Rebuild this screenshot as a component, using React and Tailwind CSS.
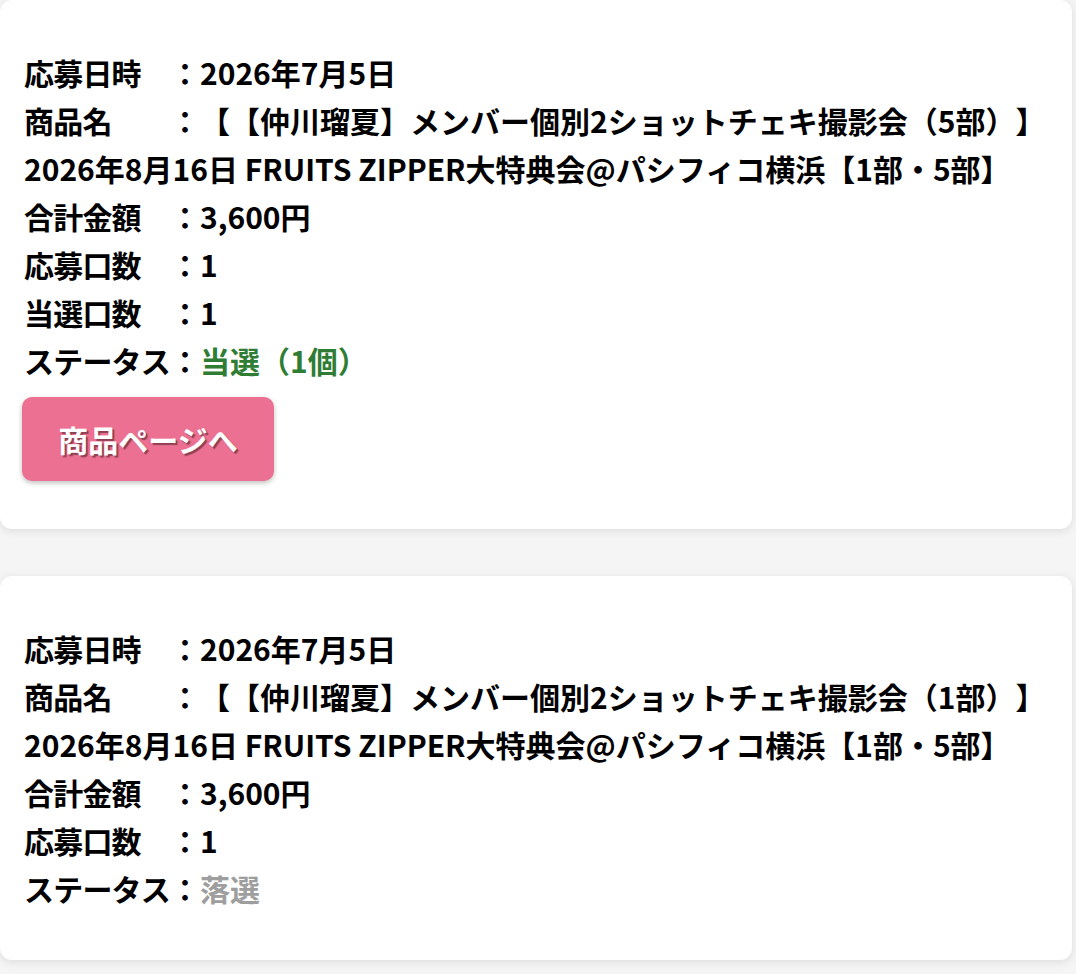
import React from 'react';

const FONT = { fontFamily: '"Noto Sans CJK JP", "Noto Sans", sans-serif' };

function Label({ children }) {
  return <span className="inline-block w-[146px] whitespace-nowrap tracking-[-0.8px]">{children}</span>;
}

function Row({ label, children }) {
  return (
    <div className="leading-[48px]">
      <Label>{label}</Label>
      <span>：</span>
      {children}
    </div>
  );
}

function EntryCard({ name, won, status, statusClass, showButton }) {
  return (
    <div className="w-[1072px] bg-white rounded-[12px] shadow-[0_2px_10px_rgba(0,0,0,0.10)] px-6 pt-[48px] pb-[48px]">
      <div className="text-[30px] font-bold text-black [text-spacing-trim:space-all]">
        <Row label="応募日時">2026年7月5日</Row>
        <div className="leading-[48px]">
          <Label>商品名</Label>
          <span>：</span>
          【【仲川瑠夏】メンバー個別2ショットチェキ撮影会（{name}）】
          <br />
          2026年8月16日 FRUITS ZIPPER大特典会@パシフィコ横浜【1部・5部】
        </div>
        <Row label="合計金額">3,600円</Row>
        <Row label="応募口数">1</Row>
        {won && <Row label="当選口数">1</Row>}
        <Row label="ステータス">
          <span className={statusClass}>{status}</span>
        </Row>
      </div>
      {showButton && (
        <button className="block mt-[13px] -ml-[2px] w-[252px] h-[84px] rounded-[10px] bg-[#ec7092] text-white text-[30px] font-bold shadow-[0_2px_5px_rgba(0,0,0,0.25)] [text-shadow:2px_2px_1px_rgba(80,30,40,0.6)] [text-spacing-trim:space-all]">
          商品ページへ
        </button>
      )}
    </div>
  );
}

export default function App() {
  return (
    <div className="min-h-[974px] w-[1076px] bg-[#f5f5f5] flex flex-col gap-[47px] overflow-hidden" style={FONT}>
      <EntryCard
        name="5部"
        won
        status="当選（1個）"
        statusClass="text-[#2f7d34]"
        showButton
      />
      <EntryCard name="1部" status="落選" statusClass="text-[#9e9e9e]" />
    </div>
  );
}
